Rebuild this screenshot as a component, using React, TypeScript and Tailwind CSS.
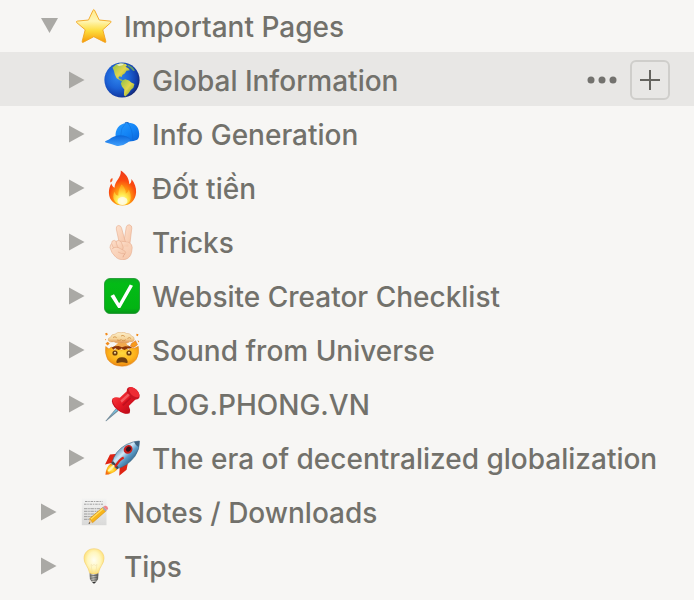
import React, { useState } from "react";

function Art({ children }: { children: React.ReactNode }) {
  return (
    <svg viewBox="0 0 36 36" className="size-9 shrink-0" aria-hidden="true">
      {children}
    </svg>
  );
}

const Star = () => (
  <Art>
    <defs>
      <linearGradient id="star" x1="0" y1="0" x2="0" y2="1">
        <stop offset="0" stopColor="#ffe98a" />
        <stop offset=".35" stopColor="#fff6b5" />
        <stop offset=".65" stopColor="#fddc3c" />
        <stop offset="1" stopColor="#f79a08" />
      </linearGradient>
    </defs>
    <path
      d="M17 2.300Q17.800.8 18.600 2.300L23.200 12l11 1.100q1.600.3.500 1.500L26.800 21.800l3 11.400q.3 1.700-1.200 1L17.800 28.700 7.400 34.200q-1.600.7-1.200-1L9.200 21.800.7 14.600q-1-1.200.6-1.500L12.500 12Z"
      fill="url(#star)"
      stroke="#f2a51f"
      strokeWidth=".9"
    />
  </Art>
);

const Globe = () => (
  <Art>
    <defs>
      <radialGradient id="sea" cx=".38" cy=".42" r=".64">
        <stop offset="0" stopColor="#2f86ec" />
        <stop offset=".5" stopColor="#1c62d6" />
        <stop offset=".85" stopColor="#123da8" />
        <stop offset="1" stopColor="#14266f" />
      </radialGradient>
      <linearGradient id="land" x1="0" y1="0" x2="1" y2="1">
        <stop offset="0" stopColor="#8fbf4a" />
        <stop offset=".5" stopColor="#e2d64c" />
        <stop offset="1" stopColor="#5f9a2b" />
      </linearGradient>
    </defs>
    <circle cx="18" cy="18" r="17.6" fill="url(#sea)" />
    <path
      d="M8.500 5.500 12 2.600l5-1.400 5 .9 1 1.700-1.600 1 3 1.400 1.500 2-3.400.6-1.800 2.800-2.400 1.400-.5 1.900-2.200-.7-1.200 1.300 1.200 1.700 2 .3 1.500 1.900-2.800-.8-3.600-2.400-1.900-3.700-.8-3.600Z"
      fill="url(#land)"
    />
    <path
      d="M18.200 18.400l3-1.200 3.800 1.200 2.200 2.200 3.200 1.400-1 3.800-2.600 2.300-2.200 3.200-3.200 3.100-1.500-1.200.4-5.600-2.400-3-1-3Z"
      fill="url(#land)"
    />
    <path d="M24 2.400l4.500 2.900 2.500 3.200-1.800.4-3.200-3.200-2.800-1.600Z" fill="#6fae5c" opacity=".8" />
    <path d="M12.500 2.800l3.500-1.300 4 .3-1.500 1.500-3.500.8Z" fill="#eef5e4" opacity=".8" />
  </Art>
);

const Cap = () => (
  <Art>
    <defs>
      <linearGradient id="crown" x1="0" y1="0" x2="1" y2="1">
        <stop offset="0" stopColor="#299cff" />
        <stop offset=".55" stopColor="#1283f5" />
        <stop offset="1" stopColor="#0a62d6" />
      </linearGradient>
      <linearGradient id="brim" x1="0" y1="0" x2="0" y2="1">
        <stop offset="0" stopColor="#0c68dc" />
        <stop offset="1" stopColor="#3f9ffc" />
      </linearGradient>
    </defs>
    <path d="M11.600 21C11 13.500 14.800 7.500 22.500 6.900 30 6.200 34.800 10 35.200 17.500q.1 4.800-2 6.200-3.300 1.700-8 1.800Z" fill="url(#crown)" />
    <path d="M1.200 25.200Q2.500 24.500 5 23.400 10 19.200 16.500 19.400q7 .3 9.500 3 .5 2.400-2.300 4.200Q18.500 30.600 13 30 8.500 28 1.800 26.500Q.6 25.900 1.200 25.200Z" fill="url(#brim)" />
    <path d="M12 20.200q8-2.100 14 2.800M21.800 7q-5.500 5.400-5 12.300M23.700 7q5 5.500 5.100 17.200" fill="none" stroke="#0b5fc8" strokeWidth=".6" opacity=".5" />
    <path d="M20.800 7q2-1.200 4 0" fill="none" stroke="#0b5fc8" strokeWidth="1" />
  </Art>
);

const Fire = () => (
  <Art>
    <defs>
      <radialGradient id="fire" cx=".5" cy=".8" r=".8">
        <stop offset="0" stopColor="#ffe047" />
        <stop offset=".35" stopColor="#ff9a10" />
        <stop offset=".65" stopColor="#fb4a10" />
        <stop offset="1" stopColor="#ee3a1c" />
      </radialGradient>
      <radialGradient id="core" cx=".5" cy=".8" r=".7">
        <stop offset="0" stopColor="#fffce0" />
        <stop offset=".45" stopColor="#ffec50" />
        <stop offset="1" stopColor="#ffa51b" />
      </radialGradient>
    </defs>
    <path
      d="M16.800.6C22 3.800 25 8.300 25.300 14.200c1.800-1.200 2.300-3 2.100-5.200 3.300 4 5 8.600 4.700 13.300C31.600 30.500 26.200 35.600 18.500 35.600S5.200 30.500 4.900 23c-.1-3.500.8-6.400 2.400-9.400.6 2 1.500 3.200 3.200 4.200C10.800 10.500 17.500 8 16.800.6Z"
      fill="url(#fire)"
    />
    <path d="M8.400 8.100q-3 1.500-2 4.400Q9.200 11.500 8.400 8.100Z" fill="#f35a25" />
    <path
      d="M17.500 14.500q4.600 3.800 4.200 9.300 2.400-1 3.200-4.200 4.200 9.800-1 13.600-5.500 3.600-10.800.2-5.800-4.200-2.800-11.700 1.200 3.500 4 4.100-.1-6.600 3.200-11.300Z"
      fill="url(#core)"
    />
    <ellipse cx="18.500" cy="31" rx="5" ry="3.900" fill="#fffce8" opacity=".8" />
  </Art>
);

const Victory = () => (
  <Art>
    <defs>
      <linearGradient id="skin" x1="0" y1="0" x2="1" y2="1">
        <stop offset="0" stopColor="#fde0cc" />
        <stop offset="1" stopColor="#f6c6a9" />
      </linearGradient>
    </defs>
    <g fill="url(#skin)" stroke="#e5ad8f" strokeWidth=".6" strokeLinejoin="round">
      <path d="M19.800 18.200 22.300 3q.8-2.700 3.300-2.200 2.500.7 2.200 3.400L25.800 20.500Z" />
      <path d="M15.600 20.500 12.300 5q-.4-2.900 1.900-3.500 2.500-.3 3.300 2.300L21.700 19Z" />
      <path d="M8.500 19Q12 17 17.500 17.200l7.400 1.300q3.400 1.600 3.300 5.200l-.6 4.500q-1.400 6-6.400 7.200-5.800 1-9.200-2.100-4.600-3.800-6-9.700-.2-3.400 2.500-4.600Z" />
      <path d="M16.300 18.500h8v4h-8Z" stroke="none" />
      <path d="M8.100 17.200q2.700-2 4.400.7l2.300 5.600q.5 2.600-1.800 3-2.600-.3-4.300-4.100Q6.900 19.200 8.100 17.200Z" />
      <path d="M12.200 17.200q2.800-2 5 .8l2 5.100q.4 2.700-2 3-2.200 0-3.600-3.500Q12 19.300 12.200 17.200Z" />
      <path d="M8 24.900q4-3.300 8.600-.1l4.100 2.100q1.700 1.500.5 2.800-3.700.6-7.200-1.700" />
    </g>
    <path d="M20.800 30q-1.400 1.200-1.800 3.300" fill="none" stroke="#dc9d7e" strokeWidth=".7" />
  </Art>
);

const Check = () => (
  <Art>
    <defs>
      <linearGradient id="tick" x1="0" y1="0" x2="0" y2="1">
        <stop offset="0" stopColor="#0bae1f" />
        <stop offset=".15" stopColor="#03bb16" />
        <stop offset=".85" stopColor="#02b413" />
        <stop offset="1" stopColor="#079418" />
      </linearGradient>
    </defs>
    <rect x=".5" y=".5" width="35" height="35" rx="5.500" fill="url(#tick)" stroke="#17932a" strokeWidth=".8" />
    <path d="M6.500 18 10 16.300 15.200 25.200 25.800 6.500 29 7.800 16.300 30H14.200Z" fill="#fff" />
  </Art>
);

const Exploding = () => (
  <Art>
    <defs>
      <radialGradient id="face" cx=".5" cy=".35" r=".65">
        <stop offset="0" stopColor="#ffd83e" />
        <stop offset=".6" stopColor="#fdb31c" />
        <stop offset="1" stopColor="#ea8412" />
      </radialGradient>
      <linearGradient id="cloud" x1="0" y1="0" x2="0" y2="1">
        <stop offset="0" stopColor="#fdf0cc" />
        <stop offset=".6" stopColor="#f5d49a" />
        <stop offset="1" stopColor="#e08f4c" />
      </linearGradient>
    </defs>
    <path d="M1.700 14.500 5 17l2.200-2 3.600 3.200 3.300-2.300 3.500 2 3.500-2.200 3.400 2.300 3-2.600 2.500 1.200 4.300-2.300q1.400 7.600-2.200 13.300-5.300 6.800-14.200 6.600-9.400-.2-14.200-6.800Q.6 21.500 1.700 14.500Z" fill="url(#face)" stroke="#df8217" strokeWidth=".5" />
    <path d="M7.500 15.500 12 13.500h12l4 2-2.500 1-2 0-3 1.500-3-1.500-3 1.500-3.200-1.800-2 1.200Z" fill="#8a3408" />
    <path d="M13.500 8h9.500l-.5 4 2.500 2.600-3.800-.4-3.200 1-3.500-1.300-3.800.4 3-3Z" fill="#f1a94e" />
    <path d="M4.300 8.600Q3.500 5.900 6.600 5.200 7.400 1.900 11 2.200q2.700-2.600 6.200-1.500Q20-.5 22.500 1.500 26.200.9 27.500 4q3.200.6 2.700 3.900-1.300 2.500-4.300 1.700-2.500 2.300-5 .7-3.700 1.700-6-.2-2.600 1.700-4.900-.4-4 1-5.700-1.100Z" fill="url(#cloud)" stroke="#dca766" strokeWidth=".5" />
    <path d="M9 5.500q2-1.600 3.700.2M17 4q2-1.500 3.800.5M23.500 6.500q1.800-1.800 3.600 0M13 8q2.300 1.200 4.500-.4M18 8.500q2 .9 3.700-.7" fill="none" stroke="#d39448" strokeWidth=".9" />
    <path d="m27.500 11.500 4-2.800 2 4-3.700 2.800-3.400-1.300Z" fill="#f79a1c" stroke="#d8631d" strokeWidth=".5" />
    <path d="m1 1.500 2.100-.7.7 1.900-1.800.7ZM32.500 1.700l2 .6-.7 2-1.600-.8ZM1.500 11.500l2.200-1.700 2 1.700-2.200 2ZM33.500 8.200l1.800 1-.9 1.400ZM1 7l1.200.3-.7 1.100Z" fill="#f28b1c" />
    <g fill="#70400f">
      <ellipse cx="11" cy="21" rx="2.600" ry="2.600" />
      <ellipse cx="25" cy="21" rx="2.600" ry="2.600" />
      <path d="M12.300 30q.4-4.700 5.700-4.700t5.700 4.700q0 1.300-1.200 1-4.500-1.300-9 0-1.200.1-1.200-1Z" />
    </g>
    <circle cx="11" cy="20.700" r="1" fill="#ffe9a6" />
    <circle cx="25" cy="20.700" r="1" fill="#ffe9a6" />
  </Art>
);

const Pin = () => (
  <Art>
    <defs>
      <linearGradient id="pin" x1="0" y1="0" x2="1" y2="1">
        <stop offset="0" stopColor="#ff4a48" />
        <stop offset=".5" stopColor="#e41824" />
        <stop offset="1" stopColor="#a90414" />
      </linearGradient>
    </defs>
    <path d="m12 22.200 2.700 2.600L2.200 35.300l-.8-.2Z" fill="#758e9d" />
    <path d="m12.500 23 1.200 1.100L6 30.500Z" fill="#75c9ec" />
    <ellipse cx="16.700" cy="19.800" rx="10.700" ry="5.300" transform="rotate(40 16.700 19.800)" fill="#c50d1b" />
    <path d="M8.400 12.700q3.500-2.400 7.400-.9L24.400 3.700 33 12l-8.200 8.100q2 3.500.8 7.200-5 1.200-11.200-3.900-6-5.400-6-10.700Z" fill="url(#pin)" />
    <ellipse cx="29.200" cy="7.300" rx="7.600" ry="4.800" transform="rotate(44 29.200 7.300)" fill="#c91522" />
    <ellipse cx="30" cy="6.200" rx="6.400" ry="3.500" transform="rotate(44 30 6.200)" fill="#ee2c34" />
    <path d="m16.400 14.600 7.600-7.200 1.800 1.800-8 7.600Z" fill="#ff8180" opacity=".6" />
    <path d="m18.700 19.400 8-7.600" stroke="#a70919" strokeWidth="1.800" opacity=".5" />
  </Art>
);

const Rocket = () => (
  <Art>
    <defs>
      <linearGradient id="hull" x1=".2" y1=".2" x2=".8" y2=".8">
        <stop offset="0" stopColor="#3f7eac" />
        <stop offset=".38" stopColor="#d5eaf7" />
        <stop offset=".6" stopColor="#5e9fcb" />
        <stop offset="1" stopColor="#235276" />
      </linearGradient>
      <radialGradient id="flame">
        <stop offset="0" stopColor="#fff27a" />
        <stop offset=".6" stopColor="#ffc41d" />
        <stop offset="1" stopColor="#f46c12" />
      </radialGradient>
    </defs>
    <path d="M13.500 13.800 6 14.600 1 24.400l7.400-1.700ZM23.800 23.500l-1.200 6.300-7.400 6 .5-8.100Z" fill="#df2413" />
    <path d="M7 23.300Q1.500 27.700 1.400 34.800 8 34.600 13.400 29.500Z" fill="url(#flame)" />
    <path d="M7.700 23.800Q10.400 10.900 22.500 4.400 29.300 1.200 35.400 1q.5 8.400-4.500 15.300Q23.300 26.400 12.700 28.800Z" fill="url(#hull)" stroke="#365f7c" strokeWidth=".6" />
    <path d="M30 1.800q3-.7 5.400-.8 0 3.100-.8 6.200Q31.500 5.500 30 1.800Z" fill="#3f6280" />
    <path d="m7.200 22.700 6.200 6.500 1.200-1.900-5.400-6Z" fill="#3e474d" />
    <ellipse cx="24.100" cy="9.400" rx="4.700" ry="4.100" transform="rotate(-43 24.100 9.400)" fill="#c71c1b" />
    <ellipse cx="24.500" cy="9.100" rx="2.800" ry="2.300" transform="rotate(-43 24.500 9.100)" fill="#34131b" />
    <path d="M19.700 17.500Q15.600 19.300 11 27" fill="none" stroke="#d92317" strokeWidth="2.300" />
    <path d="M5 30.500 9.500 26" stroke="#fff8ad" strokeWidth="2.300" strokeLinecap="round" />
  </Art>
);

const Memo = () => (
  <Art>
    <defs>
      <linearGradient id="paper" x1="0" y1="0" x2="0" y2="1">
        <stop offset="0" stopColor="#f4f4f3" />
        <stop offset="1" stopColor="#d9d9d8" />
      </linearGradient>
    </defs>
    <path d="M5.800 4.500h24.700v26.700H5.800Z" fill="url(#paper)" />
    <g stroke="#8d8d8d" strokeWidth=".8" fill="none">
      <path d="M9 7.500h17.500M8 10.200h19" strokeDasharray="2.500 .8 1.400 .9" />
      <path d="M8 14.700h17M8 17.300h14M8 20h12M8 22.600h9M8 25.300h7" strokeDasharray="3.500 .7 1.600 .6" />
    </g>
    <path d="m13.500 25.200 2.500 3.600-3.200.8Z" fill="#efc38b" />
    <path d="m13.600 24.600 13-11.100 3.200 3.700-13.200 11.500Z" fill="#f8b51b" stroke="#c78212" strokeWidth=".5" />
    <path d="m14.900 25.100 12.600-10.900" stroke="#ffe16a" strokeWidth="1.200" />
    <path d="m26.200 13.800 1.500-1.200 3.300 3.700-1.500 1.300Z" fill="#aaa9ab" />
    <path d="m27.500 12.800 1.400-1q2.700-.4 3.300 2.600l-1.200 1.800Z" fill="#f1848c" />
    <path d="m13.200 28 .9 1.300-1.500.6Z" fill="#333" />
  </Art>
);

const Bulb = () => (
  <Art>
    <defs>
      <radialGradient id="bulb" cx=".5" cy=".45" r=".58">
        <stop offset="0" stopColor="#fffef2" />
        <stop offset=".55" stopColor="#fff6bd" />
        <stop offset=".85" stopColor="#ffe481" />
        <stop offset="1" stopColor="#f8c54e" />
      </radialGradient>
      <linearGradient id="base">
        <stop offset="0" stopColor="#676763" />
        <stop offset=".4" stopColor="#d6d5cf" />
        <stop offset="1" stopColor="#4e4e4b" />
      </linearGradient>
    </defs>
    <path d="M18 .7c6 0 10 4.100 10 9.700 0 5.400-4.300 8-5.600 14.700q-.4 1.400-4.400 1.400t-4.400-1.400C12.300 18.400 8 15.800 8 10.400 8 4.800 12 .7 18 .7Z" fill="url(#bulb)" stroke="#f3cf6d" strokeWidth=".6" />
    <path d="M15 16.500 16.400 25M21 16.500 19.600 25M15 16.500l1.500 1 1.500-1 1.500 1 1.500-1" fill="none" stroke="#eedda6" strokeWidth=".5" />
    <path d="M13.600 25.200q4.400 1.700 8.800 0l-.3 6-2.200 3q-1.900 2-3.800 0l-2.200-3Z" fill="url(#base)" />
    <path d="m13.900 28 8.300-.9M14 30.300l8-.9M15 32.400l6-.6" stroke="#5d5d59" strokeWidth=".8" />
    <path d="M16.100 34h3.800l-1.400 1.600h-1Z" fill="#333" />
  </Art>
);

type Page = { title: string; icon: () => React.ReactElement; nested?: boolean };

const pages: Page[] = [
  { title: "Important Pages", icon: Star },
  { title: "Global Information", icon: Globe, nested: true },
  { title: "Info Generation", icon: Cap, nested: true },
  { title: "Đốt tiền", icon: Fire, nested: true },
  { title: "Tricks", icon: Victory, nested: true },
  { title: "Website Creator Checklist", icon: Check, nested: true },
  { title: "Sound from Universe", icon: Exploding, nested: true },
  { title: "LOG.PHONG.VN", icon: Pin, nested: true },
  { title: "The era of decentralized globalization", icon: Rocket, nested: true },
  { title: "Notes / Downloads", icon: Memo },
  { title: "Tips", icon: Bulb },
];

function Row({ page, expanded, onToggle }: { page: Page; expanded: boolean; onToggle: () => void }) {
  const Icon = page.icon;
  const active = page.title === "Global Information";
  return (
    <li
      className={`flex h-[54px] items-center pt-0.5 pr-6 ${page.nested ? "pl-[68px]" : "pl-10"} ${active ? "bg-[#e8e7e5]" : ""}`}
    >
      <button
        type="button"
        aria-label={`Toggle ${page.title}`}
        aria-expanded={expanded}
        onClick={onToggle}
        className="mr-4 flex size-5 shrink-0 items-center"
      >
        <svg viewBox="0 0 20 20" className="size-5 fill-[#aaa9a5]" aria-hidden="true">
          {expanded ? <path d="M1 2h17L9.500 17Z" /> : <path d="M1 1.500v17L16.500 10Z" />}
        </svg>
      </button>
      <a href="#" className="flex min-w-0 flex-1 items-center gap-3">
        <Icon />
        <span className="pt-0.5 whitespace-nowrap">{page.title}</span>
      </a>
      {active && (
        <div className="flex items-center gap-3">
          <button type="button" aria-label="More options" className="flex h-8 w-8 items-center justify-center">
            <svg viewBox="0 0 30 8" className="h-2 w-[30px] fill-[#73726e]" aria-hidden="true">
              <circle cx="4" cy="4" r="3.500" />
              <circle cx="15" cy="4" r="3.500" />
              <circle cx="26" cy="4" r="3.500" />
            </svg>
          </button>
          <button
            type="button"
            aria-label="Add a page inside"
            className="flex size-10 items-center justify-center rounded-md border-2 border-[#cfcecb]"
          >
            <svg viewBox="0 0 20 20" className="size-5 stroke-[#65645f] stroke-2" aria-hidden="true">
              <path d="M10 0v20M0 10h20" />
            </svg>
          </button>
        </div>
      )}
    </li>
  );
}

export default function App() {
  const [open, setOpen] = useState<string[]>(["Important Pages"]);
  const toggle = (title: string) =>
    setOpen((now) => (now.includes(title) ? now.filter((t) => t !== title) : [...now, title]));
  const shown = pages.filter((page) => !page.nested || open.includes("Important Pages"));

  return (
    <nav
      aria-label="Pages"
      className="h-screen overflow-hidden bg-[#f7f6f4] font-['Inter','Liberation_Sans',sans-serif] text-[28px] leading-9 font-medium text-[#72716b]"
    >
      <ul className="-mt-0.5">
        {shown.map((page) => (
          <Row key={page.title} page={page} expanded={open.includes(page.title)} onToggle={() => toggle(page.title)} />
        ))}
      </ul>
    </nav>
  );
}
